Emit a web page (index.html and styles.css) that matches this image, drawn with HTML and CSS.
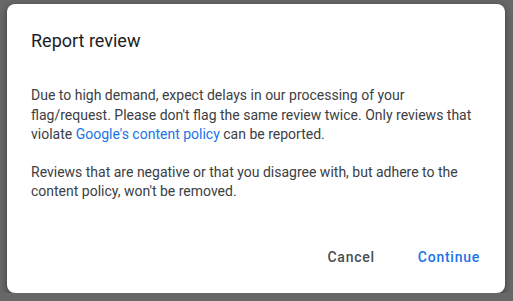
FILE: index.html
```html
<!DOCTYPE html>
<html lang="en">
  <head>
    <meta charset="UTF-8" />
    <meta name="viewport" content="width=device-width, initial-scale=1.0" />
    <title>Report review</title>
    <link rel="stylesheet" href="styles.css">
  </head>
  <body>
    <div class="dialog">
      <h2 class="title">Report review</h2>
      <div class="content">
        <p>
          Due to high demand, expect delays in our processing of your
          flag/request. Please don't flag the same review twice. Only reviews that
          violate <a href="#">Google's content policy</a> can be reported.
        </p>
        <p>
          Reviews that are negative or that you disagree with, but adhere to the
          content policy, won't be removed.
        </p>
      </div>
      <div class="actions">
        <button class="btn btn_cancel">Cancel</button>
        <button class="btn btn_continue">Continue</button>
      </div>
    </div>
  </body>
</html>
```

FILE: styles.css
```css
html {
  background-color: #676767;
}
body {
  margin: 0;
  padding: 4px 8px 0 7px;
  font-family: Roboto, "Liberation Sans", sans-serif;
}
.dialog {
  display: flex;
  flex-direction: column;
  width: 498px;
  height: 289px;
  box-sizing: border-box;
  padding-top: 25px;
  background-color: white;
  border-radius: 8px;
  box-shadow: 0 2px 6px rgba(0, 0, 0, 0.45);
}
.title {
  margin: 0 24px;
  font-size: 18px;
  font-weight: 400;
  line-height: 24px;
  color: #202124;
}
.content {
  margin: 33px 24px 0;
  font-size: 14px;
  line-height: 19.5px;
  color: #3c4043;
}
.content p {
  margin: 0 0 18px;
}
.content a {
  color: #1a73e8;
  text-decoration: none;
}
.actions {
  display: flex;
  justify-content: flex-end;
  gap: 11px;
  margin-top: auto;
  padding: 0 9px 18px 0;
}
.btn {
  height: 36px;
  padding: 0 16px;
  font-family: Roboto, "Liberation Sans", sans-serif;
  font-size: 14px;
  font-weight: 500;
  letter-spacing: 0.75px;
  background: none;
  border: none;
  border-radius: 4px;
}
.btn_cancel {
  color: #4a4d51;
}
.btn_continue {
  color: #1a73e8;
}
```
